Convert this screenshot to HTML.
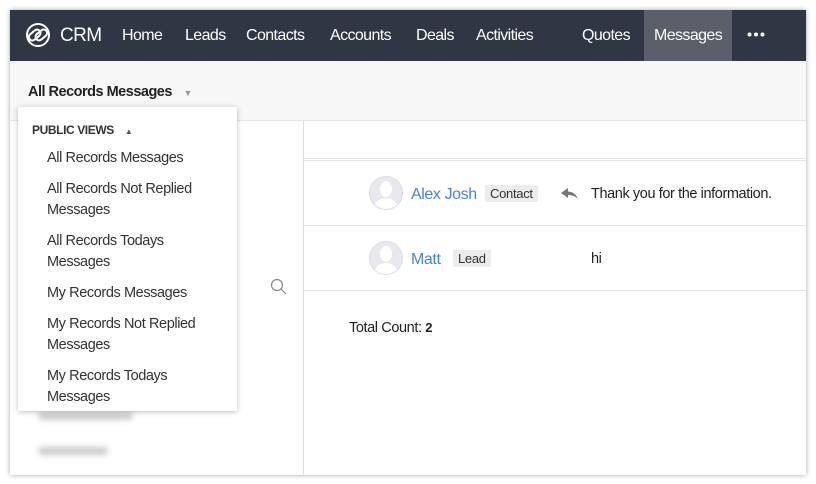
<!DOCTYPE html>
<html><head><style>
*{margin:0;padding:0;box-sizing:border-box}
body{width:816px;height:484px;background:#fff;font-family:"Liberation Sans",sans-serif;position:relative;overflow:hidden}
.frame{position:absolute;left:10px;top:10px;width:796px;height:465px;background:#fff;box-shadow:0 0 5px rgba(0,0,0,.35);overflow:hidden}
.nav{position:absolute;left:0;top:0;width:796px;height:51px;background:#313645;color:#fff}
.nav span{position:absolute;top:17px;font-size:16px;letter-spacing:-.6px}
.act{position:absolute;left:634px;top:0;width:88px;height:51px;background:#5b5f6a}
.hdr{position:absolute;left:0;top:51px;width:796px;height:60px;background:#f7f7f7;border-bottom:1px solid #e6e6e6}
.title{position:absolute;left:18px;top:23px;font-size:14.5px;font-weight:bold;color:#222;letter-spacing:-.5px}
.right{position:absolute;left:293px;top:111px;width:503px;height:354px;border-left:1px solid #ddd}
.dd{position:absolute;left:8px;top:97px;width:219px;height:304px;background:#fff;box-shadow:0 1px 5px rgba(0,0,0,.25)}
.dd div{position:absolute;left:29px;font-size:14.5px;color:#333;line-height:21px;letter-spacing:-.4px}
.av{position:absolute;width:34px;height:34px;border-radius:50%;background:#e8e9ee;border:1px solid #ddd;overflow:hidden}
.av:before{content:"";position:absolute;left:10px;top:4px;width:12px;height:16px;border-radius:50%;background:#fff}
.av:after{content:"";position:absolute;left:5px;top:21px;width:22px;height:16px;border-radius:50%;background:#fff}
.tag{position:absolute;background:#ececec;font-size:13px;color:#333;padding:1px 5px;border-radius:2px;letter-spacing:-.3px}
.name{position:absolute;color:#4a84d8;font-size:16px;letter-spacing:-.4px}
.row{position:absolute;font-size:14.5px;color:#222;letter-spacing:-.4px}
.blur{position:absolute;background:#ccc;filter:blur(3px);height:8px;border-radius:4px}
</style></head><body>
<div class="frame">
<div class="nav">
<svg style="position:absolute;left:12px;top:13px" width="32" height="24" viewBox="0 0 32 24"><circle cx="16" cy="12" r="11" fill="none" stroke="#fff" stroke-width="2"/><rect x="6" y="9" width="13" height="7" rx="3.5" transform="rotate(-40 12 12)" fill="none" stroke="#fff" stroke-width="2"/><rect x="13" y="8" width="13" height="7" rx="3.5" transform="rotate(-40 20 12)" fill="none" stroke="#fff" stroke-width="2"/></svg>
<span style="left:50px;font-size:19px;top:15px">CRM</span>
<span style="left:112px">Home</span>
<span style="left:175px">Leads</span>
<span style="left:236px">Contacts</span>
<span style="left:320px">Accounts</span>
<span style="left:406px">Deals</span>
<span style="left:466px">Activities</span>
<span style="left:572px">Quotes</span>
<div class="act"></div>
<span style="left:644px">Messages</span>
<svg style="position:absolute;left:737px;top:22px" width="18" height="5"><circle cx="2.5" cy="2.5" r="2" fill="#fff"/><circle cx="9" cy="2.5" r="2" fill="#fff"/><circle cx="15.5" cy="2.5" r="2" fill="#fff"/></svg>
</div>
<div class="hdr"><div class="title">All Records Messages <span style="color:#999;font-size:9px;margin-left:8px">▼</span></div></div>
<div class="blur" style="left:28px;top:402px;width:95px"></div>
<div class="blur" style="left:28px;top:437px;width:70px"></div>
<svg style="position:absolute;left:260px;top:268px" width="18" height="18"><circle cx="7" cy="7" r="5.5" fill="none" stroke="#888" stroke-width="1.2"/><line x1="11" y1="11" x2="16" y2="16" stroke="#888" stroke-width="1.2"/></svg>
<div class="right">
<div style="position:absolute;left:0;top:37px;width:503px;height:3px;border-top:1px solid #e4e4e4;border-bottom:1px solid #e4e4e4"></div>
<div style="position:absolute;left:0;top:104px;width:503px;border-top:1px solid #e4e4e4"></div>
<div style="position:absolute;left:0;top:169px;width:503px;border-top:1px solid #e4e4e4"></div>
<div class="av" style="left:65px;top:55px"></div>
<div class="name" style="left:107px;top:65px">Alex Josh</div>
<div class="tag" style="left:181px;top:64px">Contact</div>
<svg style="position:absolute;left:257px;top:67px" width="17" height="12" viewBox="0 0 17 12"><path d="M7 0 L0 5 L7 10 L7 7 C11 7 14 8 17 11 C15 6 12 4 7 3.5 Z" fill="#777"/></svg>
<div class="row" style="left:287px;top:65px">Thank you for the information.</div>
<div class="av" style="left:65px;top:120px"></div>
<div class="name" style="left:107px;top:130px">Matt</div>
<div class="tag" style="left:149px;top:129px">Lead</div>
<div class="row" style="left:287px;top:130px">hi</div>
<div class="row" style="left:45px;top:199px">Total Count: <b style="font-size:13px">2</b></div>
</div>
<div class="dd">
<div style="left:14px;top:13px;font-size:12px;font-weight:bold;color:#333">PUBLIC VIEWS <span style="font-size:8px;margin-left:8px;color:#555">▲</span></div>
<div style="top:41px">All Records Messages</div>
<div style="top:72px">All Records Not Replied<br>Messages</div>
<div style="top:124px">All Records Todays<br>Messages</div>
<div style="top:176px">My Records Messages</div>
<div style="top:207px">My Records Not Replied<br>Messages</div>
<div style="top:259px">My Records Todays<br>Messages</div>
</div>
</div>
</body></html>
